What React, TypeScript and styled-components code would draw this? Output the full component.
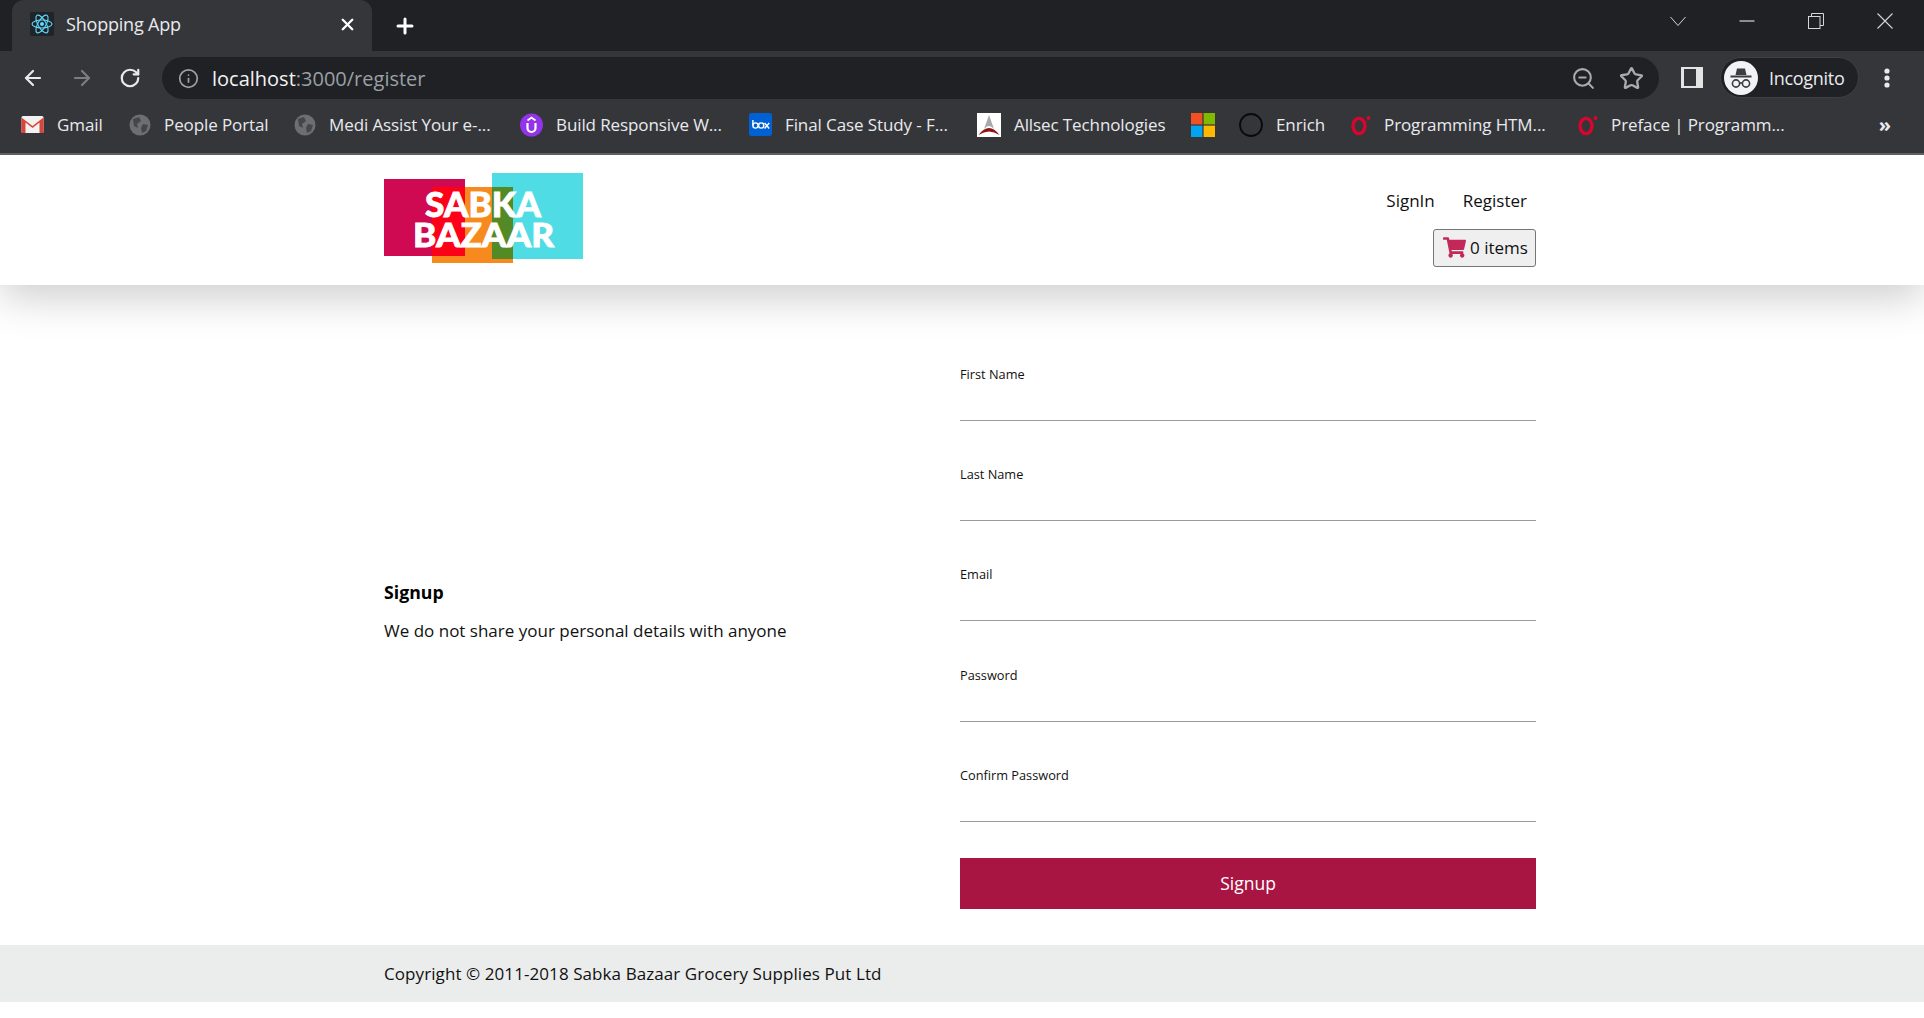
import React from "react";
import styled, { createGlobalStyle } from "styled-components";
import { ArrowLeft, ArrowRight, RotateCw, Info, ZoomOut, Star, X, Plus } from "lucide-react";
import { FaShoppingCart } from "react-icons/fa";

const GlobalStyle = createGlobalStyle`
  html, body {
    margin: 0;
    padding: 0;
    background: #ffffff;
    font-family: "Open Sans", "Noto Sans", sans-serif;
    color: #111;
  }
  * { box-sizing: border-box; }
`;

const Page = styled.div`
  width: 1924px;
  height: 1018px;
  overflow: hidden;
  display: flex;
  flex-direction: column;
`;

/* browser chrome */
const TitleBar = styled.div`
  height: 51px;
  background: #202124;
  display: flex;
  align-items: center;
  padding-left: 12px;
`;

const Tab = styled.div`
  width: 360px;
  height: 51px;
  background: #35363a;
  border-radius: 12px 12px 0 0;
  display: flex;
  align-items: center;
  padding: 0 15px 3px 18px;
  color: #e8eaed;
  font-size: 18px;
  letter-spacing: -0.2px;
`;

const TabTitle = styled.span`
  margin-left: 12px;
  flex: 1;
`;

const NewTab = styled.div`
  margin-left: 21px;
  display: flex;
  color: #fff;
`;

const WindowControls = styled.div`
  margin-left: auto;
  display: flex;
  align-items: center;
  padding: 0 31px 10px 0;
  color: #d5d6d8;
`;

const WindowIcon = styled.svg<{ $gap: number }>`
  display: block;
  width: 16px;
  height: 16px;
  margin-right: ${(p) => p.$gap}px;
`;

const Toolbar = styled.div`
  height: 48px;
  background: #35363a;
  display: flex;
  align-items: flex-start;
  padding: 6px 0 0 21px;
  color: #e8eaed;
`;

const NavButtons = styled.div`
  display: flex;
  gap: 25px;
  align-items: center;
  height: 42px;
  width: 141px;
`;

const Omnibox = styled.div`
  width: 1497px;
  height: 42px;
  border-radius: 21px;
  background: #202124;
  display: flex;
  align-items: center;
  padding: 0 15px 0 16px;
  font-size: 20px;
`;

const Host = styled.span`
  color: #f1f3f4;
  margin-left: 13px;
`;

const UrlRest = styled.span`
  color: #9aa0a6;
  flex: 1;
`;

const OmniIcons = styled.div`
  display: flex;
  gap: 23px;
  align-items: center;
  color: #a9abae;
`;

const SidePanel = styled.div`
  width: 22px;
  height: 21px;
  margin: 10px 0 0 22px;
  border: 2px solid #e4e4e4;
  border-left-width: 3px;
  border-right-width: 7px;
  background: #35363a;
`;

const IncognitoPill = styled.div`
  width: 139px;
  height: 41px;
  margin-left: 17px;
  border-radius: 21px;
  background: #202124;
  border: 1px solid #3f4044;
  display: flex;
  align-items: center;
  gap: 11px;
  padding-left: 3px;
  font-size: 18px;
  letter-spacing: -0.3px;
  color: #e8eaed;
`;

const Dots = styled.svg`
  display: block;
  width: 6px;
  height: 20px;
  margin: 11px 0 0 25px;
`;

const BookmarkBar = styled.div`
  height: 56px;
  background: #35363a;
  border-bottom: 2px solid #5f6064;
  display: flex;
  align-items: center;
  padding: 0 0 2px 21px;
  gap: 24px;
  color: #e8eaed;
  font-size: 17px;
  letter-spacing: -0.1px;
  position: relative;
  z-index: 1;
`;

const Bookmark = styled.div`
  display: flex;
  align-items: center;
  gap: 13px;
  white-space: nowrap;
`;

const BookmarkLabel = styled.span<{ $w: number }>`
  width: ${(p) => p.$w}px;
`;

const Chevrons = styled.span`
  margin-left: auto;
  margin-right: 33px;
  font-size: 20px;
  font-weight: 700;
`;

/* site header */
const Header = styled.header`
  height: 130px;
  background: #fff;
  box-shadow: 0 12px 40px rgba(0, 0, 0, 0.2);
`;

const HeaderInner = styled.div`
  width: 1152px;
  margin-left: 384px;
  padding-top: 18px;
  display: flex;
  justify-content: space-between;
`;

const Logo = styled.svg`
  display: block;
  width: 199px;
  height: 90px;
`;

const HeaderRight = styled.div`
  display: flex;
  flex-direction: column;
  align-items: flex-end;
`;

const NavLinks = styled.nav`
  display: flex;
  gap: 28px;
  padding: 17px 9px 0 0;
  font-size: 17px;
  line-height: 22px;
`;

const NavLink = styled.a`
  color: #111;
`;

const CartButton = styled.button`
  margin-top: 17px;
  width: 103px;
  height: 38px;
  padding: 0 0 0 9px;
  background: #efefef;
  border: 1px solid #767676;
  border-radius: 3px;
  display: flex;
  align-items: center;
  gap: 4px;
  font-family: inherit;
  font-size: 17px;
  color: #111;

  svg {
    color: #c2285a;
  }
`;

/* register form */
const Main = styled.main`
  flex: 1;
`;

const Columns = styled.div`
  width: 1152px;
  margin-left: 384px;
  display: grid;
  grid-template-columns: 576px 576px;
`;

const Intro = styled.div`
  align-self: center;
  margin-bottom: 8px;
`;

const IntroTitle = styled.h2`
  margin: 0 0 16px;
  font-size: 17.7px;
  font-weight: 700;
  line-height: 24px;
  color: #000;
`;

const IntroText = styled.p`
  margin: 0;
  font-size: 17px;
  line-height: 22px;
  color: #111;
`;

const Form = styled.form`
  padding: 73px 0 36px;
`;

const Field = styled.div`
  padding-top: 8px;
  margin-bottom: 37.25px;
`;

const FieldLabel = styled.label`
  display: block;
  font-size: 12.75px;
  line-height: 16px;
  color: #111;
`;

const FieldInput = styled.input`
  display: block;
  width: 100%;
  height: 39px;
  border: none;
  border-bottom: 1px solid #9a9a9a;
  outline: none;
  background: transparent;
`;

const SubmitButton = styled.button`
  display: block;
  width: 100%;
  height: 51px;
  margin-top: -1px;
  padding-bottom: 2px;
  border: none;
  background: #a91543;
  color: #fff;
  font-family: inherit;
  font-size: 17.5px;
`;

const Footer = styled.footer`
  height: 57px;
  margin-bottom: 16px;
  background: #ebecec;
  display: flex;
  align-items: center;
`;

const FooterText = styled.div`
  width: 1152px;
  margin-left: 384px;
  font-size: 17px;
  letter-spacing: 0.08px;
  color: #111;
`;

const ReactIcon = () => (
  <svg width="24" height="24" viewBox="0 0 24 24">
    <rect width="24" height="24" rx="2" fill="#20232a" />
    <g fill="none" stroke="#61dafb" strokeWidth="1.1">
      <ellipse cx="12" cy="12" rx="10" ry="4" />
      <ellipse cx="12" cy="12" rx="10" ry="4" transform="rotate(60 12 12)" />
      <ellipse cx="12" cy="12" rx="10" ry="4" transform="rotate(120 12 12)" />
    </g>
    <circle cx="12" cy="12" r="2" fill="#61dafb" />
  </svg>
);

const GmailIcon = () => (
  <svg width="23" height="23" viewBox="0 0 23 23">
    <rect x="0.5" y="3" width="22" height="17" rx="1.5" fill="#f2f2f2" />
    <path d="M0.5 4.5 L11.5 13 L22.5 4.5 V20 H18.5 V9.5 L11.5 15 L4.5 9.5 V20 H0.5 Z" fill="#d9453a" />
  </svg>
);

const GlobeIcon = () => (
  <svg width="22" height="22" viewBox="0 0 22 22">
    <circle cx="11" cy="11" r="10.5" fill="#6c6e72" />
    <path d="M4 5 L10 3 L12 7 L8 10 L9 14 L5 12 Z M14 10 L19 11 L17 17 L13 19 L12 14 Z" fill="#45464a" />
  </svg>
);

const UdemyIcon = () => (
  <svg width="23" height="24" viewBox="0 0 23 24">
    <circle cx="11.5" cy="12" r="11.5" fill="#9333ea" />
    <path d="M7.5 10 V15 a4 4 0 0 0 8 0 V10" fill="none" stroke="#fff" strokeWidth="2.2" />
    <path d="M7.5 7.5 L11.5 4.5 L15.5 7.5" fill="none" stroke="#fff" strokeWidth="1.8" />
  </svg>
);

const BoxIcon = () => (
  <svg width="23" height="23" viewBox="0 0 23 23">
    <rect width="23" height="23" rx="2.5" fill="#0061d5" />
    <g fill="none" stroke="#fff" strokeWidth="1.4">
      <circle cx="6.5" cy="12.5" r="2.6" />
      <circle cx="12.2" cy="12.5" r="2.6" />
      <path d="M3.9 7 V12.5 M15.6 10 L20.2 15.5 M20.2 10 L15.6 15.5" />
    </g>
  </svg>
);

const AllsecIcon = () => (
  <svg width="24" height="24" viewBox="0 0 24 24">
    <rect width="24" height="24" fill="#fff" />
    <path d="M12 2 L17 16 Q12 10 7 16 Z" fill="#a9a9ad" />
    <path d="M1.5 22 Q12 8 22.5 22 Q12 15 1.5 22 Z" fill="#8c1414" />
  </svg>
);

const MicrosoftIcon = () => (
  <svg width="24" height="24" viewBox="0 0 24 24">
    <rect width="11.4" height="11.4" fill="#f25022" />
    <rect x="12.6" width="11.4" height="11.4" fill="#7fba00" />
    <rect y="12.6" width="11.4" height="11.4" fill="#00a4ef" />
    <rect x="12.6" y="12.6" width="11.4" height="11.4" fill="#ffb900" />
  </svg>
);

const EnrichIcon = () => (
  <svg width="24" height="24" viewBox="0 0 24 24">
    <circle cx="12" cy="12" r="11" fill="#35363a" stroke="#0a0a0a" strokeWidth="1.8" />
  </svg>
);

const RedOIcon = () => (
  <svg width="20" height="22" viewBox="0 0 20 22">
    <ellipse cx="8" cy="12" rx="6" ry="7.6" fill="none" stroke="#d9052f" strokeWidth="3.4" />
    <circle cx="17.5" cy="4" r="1.9" fill="#d9052f" />
  </svg>
);

const IncognitoIcon = () => (
  <svg width="34" height="34" viewBox="0 0 34 34">
    <circle cx="17" cy="17" r="17" fill="#f1f3f4" />
    <path d="M11.5 14 L13 7.5 H21 L22.5 14 Z" fill="#3c3d41" />
    <rect x="6.5" y="14.5" width="21" height="2" fill="#3c3d41" />
    <g fill="none" stroke="#3c3d41" strokeWidth="1.6">
      <circle cx="12" cy="22.5" r="3.6" />
      <circle cx="22" cy="22.5" r="3.6" />
      <path d="M15.6 22 H18.4" />
    </g>
  </svg>
);

const bookmarks = [
  { icon: <GmailIcon />, label: "Gmail", w: 48 },
  { icon: <GlobeIcon />, label: "People Portal", w: 106 },
  { icon: <GlobeIcon />, label: "Medi Assist Your e-...", w: 167 },
  { icon: <UdemyIcon />, label: "Build Responsive W...", w: 169 },
  { icon: <BoxIcon />, label: "Final Case Study - F...", w: 168 },
  { icon: <AllsecIcon />, label: "Allsec Technologies", w: 153 },
  { icon: <MicrosoftIcon />, label: "", w: 0 },
  { icon: <EnrichIcon />, label: "Enrich", w: 51 },
  { icon: <RedOIcon />, label: "Programming HTM...", w: 170 },
  { icon: <RedOIcon />, label: "Preface | Programm...", w: 172 },
];

const fields = ["First Name", "Last Name", "Email", "Password", "Confirm Password"];

const App: React.FC = () => {
  return (
    <Page>
      <GlobalStyle />
      <TitleBar>
        <Tab>
          <ReactIcon />
          <TabTitle>Shopping App</TabTitle>
          <X size={19} strokeWidth={3} color="#fff" />
        </Tab>
        <NewTab>
          <Plus size={24} strokeWidth={3} />
        </NewTab>
        <WindowControls>
          <WindowIcon $gap={53} viewBox="0 0 16 16" fill="none" stroke="currentColor">
            <path d="M0.5 4 L8 12.5 L15.5 4" />
          </WindowIcon>
          <WindowIcon $gap={53} viewBox="0 0 16 16" fill="none" stroke="currentColor" strokeWidth="1.2">
            <path d="M0.5 8 H15.5" />
          </WindowIcon>
          <WindowIcon $gap={53} viewBox="0 0 16 16" fill="none" stroke="currentColor">
            <rect x="0.5" y="3.5" width="11.5" height="12" />
            <path d="M3.5 3.5 V0.5 H15.5 V12.5 H12" />
          </WindowIcon>
          <WindowIcon $gap={0} viewBox="0 0 16 16" fill="none" stroke="currentColor" strokeWidth="1.1">
            <path d="M0.5 0.5 L15.5 15.5 M15.5 0.5 L0.5 15.5" />
          </WindowIcon>
        </WindowControls>
      </TitleBar>

      <Toolbar>
        <NavButtons>
          <ArrowLeft size={24} strokeWidth={2.2} />
          <ArrowRight size={24} strokeWidth={2.2} color="#7c7e82" />
          <RotateCw size={22} strokeWidth={2.4} />
        </NavButtons>
        <Omnibox>
          <Info size={21} color="#9aa0a6" />
          <Host>localhost</Host>
          <UrlRest>:3000/register</UrlRest>
          <OmniIcons>
            <ZoomOut size={25} strokeWidth={2} />
            <Star size={25} strokeWidth={2.2} />
          </OmniIcons>
        </Omnibox>
        <SidePanel />
        <IncognitoPill>
          <IncognitoIcon />
          Incognito
        </IncognitoPill>
        <Dots viewBox="0 0 6 20" fill="#e8eaed">
          <circle cx="3" cy="3" r="2.6" />
          <circle cx="3" cy="10" r="2.6" />
          <circle cx="3" cy="17" r="2.6" />
        </Dots>
      </Toolbar>

      <BookmarkBar>
        {bookmarks.map((b, i) => (
          <Bookmark key={i}>
            {b.icon}
            {b.label && <BookmarkLabel $w={b.w}>{b.label}</BookmarkLabel>}
          </Bookmark>
        ))}
        <Chevrons>»</Chevrons>
      </BookmarkBar>

      <Header>
        <HeaderInner>
          <Logo viewBox="0 0 199 90">
            <rect x="0" y="6" width="81" height="77" fill="#cf0a53" />
            <rect x="48" y="14" width="81" height="76" fill="#f68a1f" />
            <rect x="48" y="14" width="33" height="69" fill="#ff0019" />
            <rect x="108" y="0" width="91" height="86" fill="#50dce4" />
            <rect x="108" y="14" width="21" height="72" fill="#538a26" />
            <text x="41" y="44" fontFamily="Lato" fontWeight="900" fontSize="34" fill="#fff" stroke="#fff" strokeWidth="0.8" textLength="116" lengthAdjust="spacingAndGlyphs">SABKA</text>
            <text x="29" y="74" fontFamily="Lato" fontWeight="900" fontSize="33" fill="#fff" stroke="#fff" strokeWidth="0.8" textLength="141" lengthAdjust="spacingAndGlyphs">BAZAAR</text>
          </Logo>
          <HeaderRight>
            <NavLinks>
              <NavLink>SignIn</NavLink>
              <NavLink>Register</NavLink>
            </NavLinks>
            <CartButton type="button">
              <FaShoppingCart size={23} />
              0 items
            </CartButton>
          </HeaderRight>
        </HeaderInner>
      </Header>

      <Main>
        <Columns>
          <Intro>
            <IntroTitle>Signup</IntroTitle>
            <IntroText>We do not share your personal details with anyone</IntroText>
          </Intro>
          <Form>
            {fields.map((f) => (
              <Field key={f}>
                <FieldLabel>{f}</FieldLabel>
                <FieldInput />
              </Field>
            ))}
            <SubmitButton type="button">Signup</SubmitButton>
          </Form>
        </Columns>
      </Main>

      <Footer>
        <FooterText>Copyright © 2011-2018 Sabka Bazaar Grocery Supplies Put Ltd</FooterText>
      </Footer>
    </Page>
  );
};

export default App;
